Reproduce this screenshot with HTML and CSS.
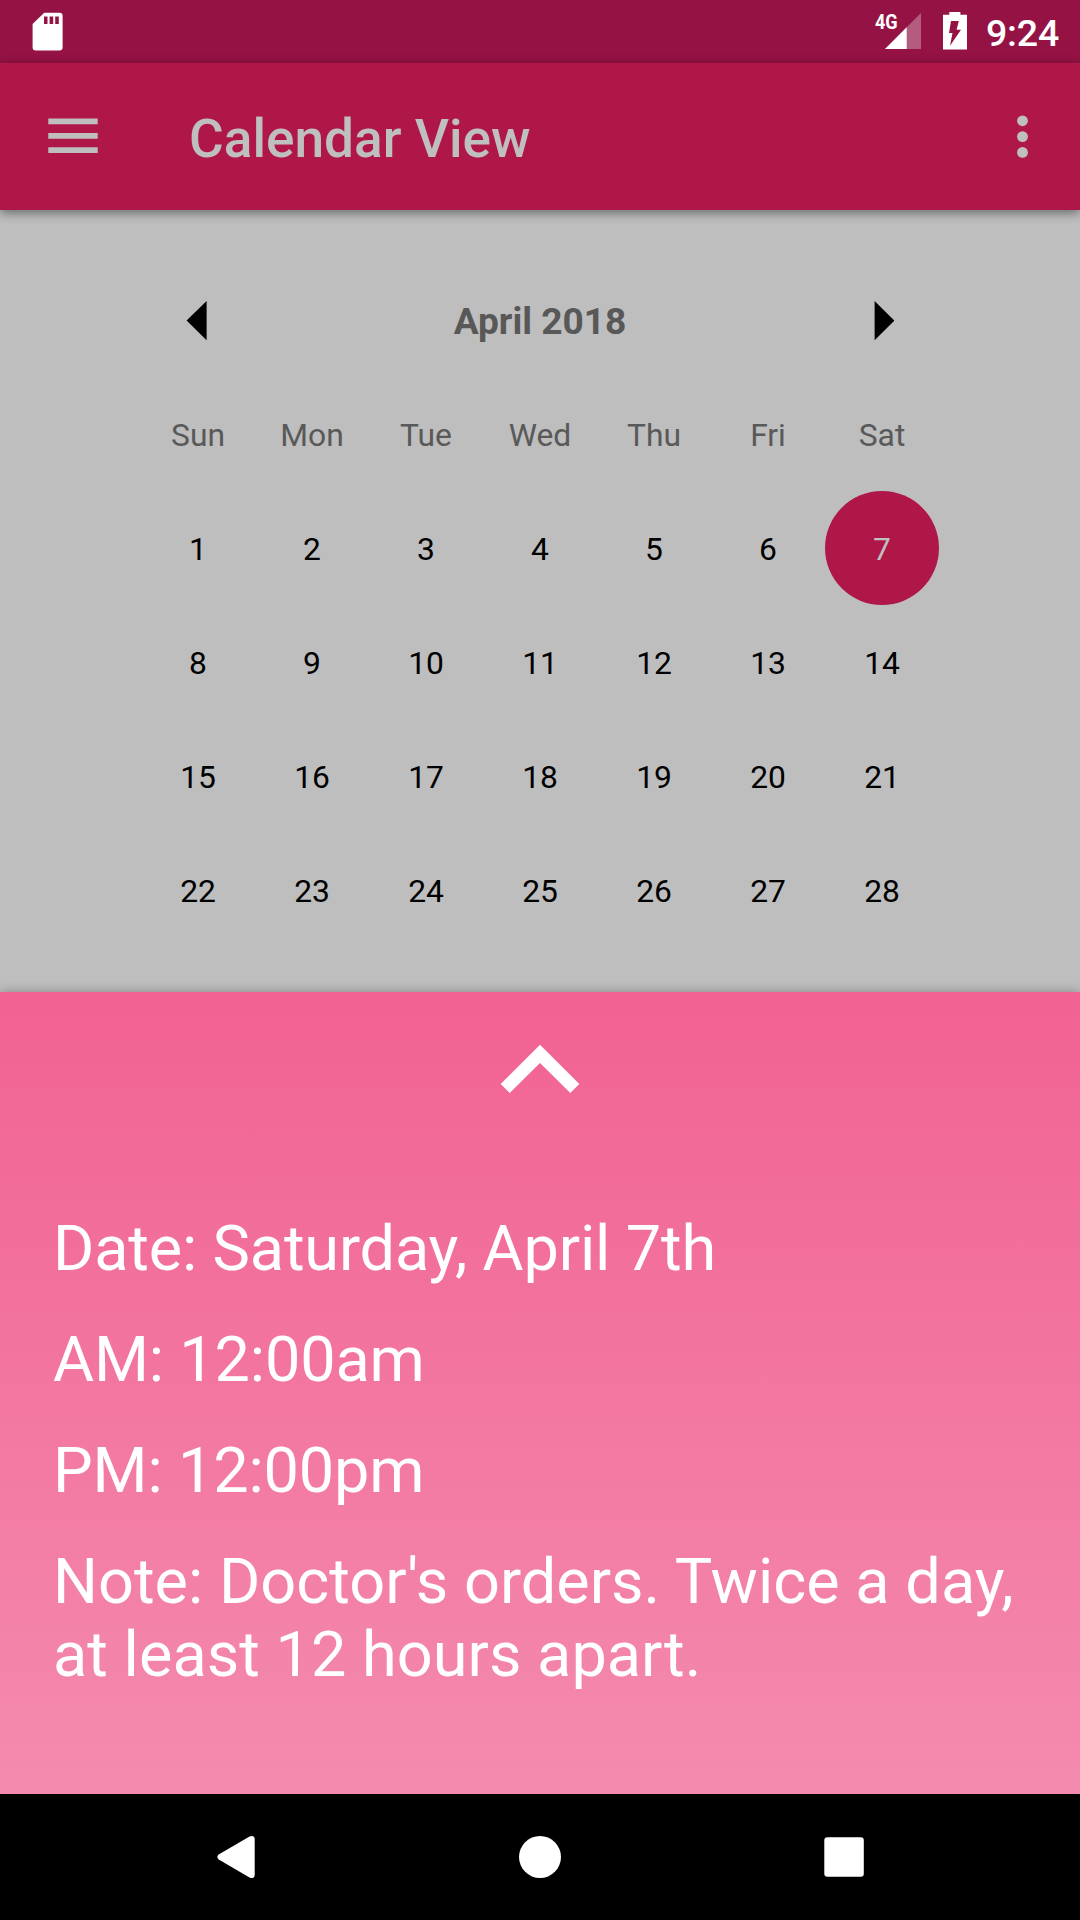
FILE: index.html
```html
<!DOCTYPE html>
<html lang="en">
<head>
<meta charset="utf-8">
<title>Calendar View</title>
<link rel="stylesheet" href="styles.css">
</head>
<body>
<div class="screen">
  <header class="status-bar">
    <svg class="sd-icon" width="32" height="40" viewBox="0 0 32 40" fill="#fff"><path fill-rule="evenodd" d="M12.2.7H27.500Q30.600.7 30.600 3.800V35.600Q30.600 38.600 27.500 38.600H3.700Q.6 38.600.6 35.600V12ZM12 4.500V12H15.500V4.500ZM17.600 4.500V12H21.200V4.500ZM23.200 4.500V12H26.800V4.500Z"/></svg>
    <div class="status-right">
      <span class="network">4G</span>
      <svg class="signal-icon" width="38" height="38" viewBox="0 0 38 38"><path d="M37 1V37H1Z" fill="#b45c7f"/><path d="M22.700 15.300V37H1Z" fill="#fff"/></svg>
      <svg class="battery-icon" width="24" height="38" viewBox="0 0 24 38"><path fill="#fff" fill-rule="evenodd" d="M6.300 0H17.400V2.800H24V37.500H0V2.800H6.300ZM8 9H15.800L13.600 17.700H18L7 33.700L9.500 21H6Z"/></svg>
      <time class="clock">9:24</time>
    </div>
  </header>
  <nav class="app-bar">
    <svg class="menu-icon" width="50" height="36" viewBox="0 0 50 36" fill="#bfbfbf"><path d="M.3.600H49.700V6.300H.3ZM.3 14.900H49.700V20.700H.3ZM.3 29.300H49.700V35H.3Z"/></svg>
    <h1 class="title">Calendar View</h1>
    <svg class="more-icon" width="12" height="44" viewBox="0 0 12 44" fill="#bfbfbf"><circle cx="5.500" cy="5.800" r="5.400"/><circle cx="5.500" cy="21.600" r="5.400"/><circle cx="5.500" cy="37.400" r="5.400"/></svg>
  </nav>
  <main class="content">
    <div class="month-row">
      <svg width="21" height="41" viewBox="0 0 21 41"><path d="M.6 20.600L20.600 1V40.200Z"/></svg>
      <h2 class="month">April 2018</h2>
      <svg width="21" height="41" viewBox="0 0 21 41"><path d="M21.300 20.600L1.600 1V40.200Z"/></svg>
    </div>
    <div class="grid weekdays"><span>Sun</span><span>Mon</span><span>Tue</span><span>Wed</span><span>Thu</span><span>Fri</span><span>Sat</span></div>
    <div class="grid days">
      <span>1</span><span>2</span><span>3</span><span>4</span><span>5</span><span>6</span><span class="selected">7</span>
      <span>8</span><span>9</span><span>10</span><span>11</span><span>12</span><span>13</span><span>14</span>
      <span>15</span><span>16</span><span>17</span><span>18</span><span>19</span><span>20</span><span>21</span>
      <span>22</span><span>23</span><span>24</span><span>25</span><span>26</span><span>27</span><span>28</span>
    </div>
  </main>
  <section class="sheet">
    <svg class="chevron" width="80" height="50" viewBox="0 0 80 50"><path d="M40 .700L79.300 40L70.300 49L40 19L9.700 49L.7 40Z" fill="#fff"/></svg>
    <div class="details">
      <p class="entry">Date: Saturday, April 7th</p>
      <p class="entry">AM: 12:00am</p>
      <p class="entry">PM: 12:00pm</p>
      <p class="note">Note: Doctor's orders. Twice a day, at least 12 hours apart.</p>
    </div>
  </section>
  <footer class="nav-bar">
    <svg width="42" height="44" viewBox="0 0 42 44" fill="#fff"><path d="M3.700 19.600L34.500 1.500Q39.700-.5 39.700 4.500V39.500Q39.700 44.500 34.500 42.500L3.700 24.400Q1 22 3.700 19.600Z"/></svg>
    <svg width="42" height="44" viewBox="0 0 42 44" fill="#fff"><circle cx="21" cy="22" r="21"/></svg>
    <svg width="42" height="44" viewBox="0 0 42 44" fill="#fff"><rect x="1.300" y="2.300" width="39.500" height="39.500" rx="3"/></svg>
  </footer>
</div>
</body>
</html>
```
FILE: styles.css
```css
* { box-sizing: border-box; margin: 0; padding: 0; }
body { font-family: Roboto, sans-serif; background: #000; }
svg { display: block; flex: none; }
.screen { width: 1080px; height: 1920px; display: flex; flex-direction: column; overflow: hidden; }
.status-bar { height: 63px; flex: none; background: #941244; display: flex; justify-content: space-between; padding: 12px 21px 0 32px; }
.status-right { display: flex; color: #fff; }
.network { font-size: 21px; font-weight: 700; line-height: 20px; width: 9px; white-space: nowrap; transform: scaleX(.86); transform-origin: left; }
.battery-icon { margin-left: 21px; }
.clock { font-size: 37.500px; font-weight: 500; line-height: 42px; margin-left: 19px; letter-spacing: -.2px; }
.app-bar { height: 147px; flex: none; background: #b01749; display: flex; align-items: center; padding: 0 51px 0 48px; position: relative; box-shadow: 0 3px 10px rgba(0,0,0,.45); }
.menu-icon { margin-top: -2px; }
.title { font-size: 53.200px; font-weight: 500; color: #bfbfbf; margin-left: 91px; padding-top: 5px; flex: 1; }
.content { height: 782px; flex: none; background: #bebebe; padding: 53px 141px 0; }
.month-row { height: 114px; display: flex; align-items: center; justify-content: space-between; padding: 0 45px; }
.month { font-size: 37.100px; font-weight: 700; color: #585858; padding-top: 2px; }
.grid { display: grid; grid-template-columns: repeat(7, 114px); grid-auto-rows: 114px; }
.grid span { display: flex; align-items: center; justify-content: center; font-size: 31.800px; padding-top: 1px; }
.weekdays span { color: #595959; }
.days span { color: #000; }
.days .selected { background: #b01749; color: #bfbfbf; border-radius: 50%; }
.sheet { height: 802px; flex: none; position: relative; background: linear-gradient(#f16292, #f48bae); box-shadow: 0 0 10px rgba(0,0,0,.3); padding-top: 52px; }
.chevron { margin: 0 auto; }
.details { padding: 118px 50px 0 53px; color: #fff; font-size: 63px; line-height: 74px; display: flex; flex-direction: column; gap: 37px; }
.entry { letter-spacing: -.16px; }
.note { line-height: 73px; letter-spacing: .03px; }
.nav-bar { height: 126px; flex: none; position: relative; background: #000; display: flex; align-items: center; justify-content: space-between; padding: 0 215px; }
```
